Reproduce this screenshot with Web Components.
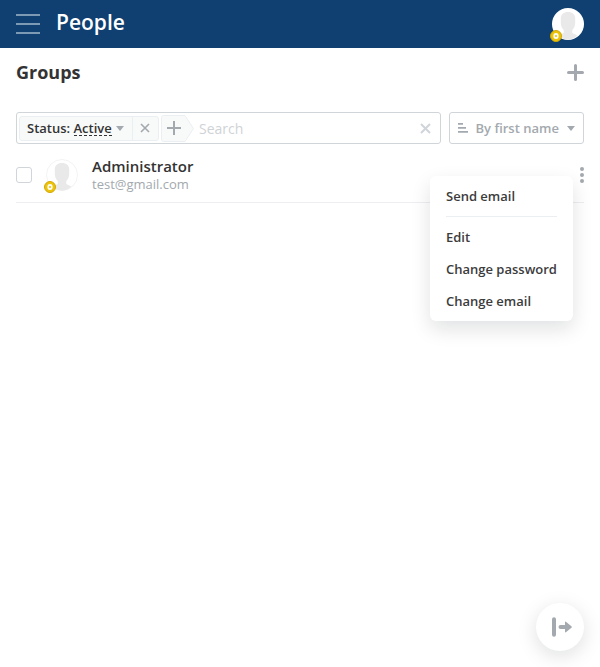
<!DOCTYPE html>
<html lang="en">
<head>
<meta charset="utf-8">
<title>People</title>
<style>
html,body{margin:0;height:100%;overflow:hidden;background:#fff}
body{font-family:"Open Sans","Noto Sans",sans-serif;color:#333}
</style>
</head>
<body>
<people-app></people-app>
<script>
function define(name, html) {
  const t = document.createElement('template');
  t.innerHTML = html;
  customElements.define(name, class extends HTMLElement {
    constructor() {
      super();
      this.attachShadow({ mode: 'open' }).appendChild(t.content.cloneNode(true));
    }
  });
}

define('user-avatar', `
<style>
:host{display:block;position:relative;width:32px;height:32px;flex:none}
svg{display:block}
.badge{position:absolute;left:-2px;top:22px}
</style>
<svg width="32" height="32" viewBox="0 0 32 32">
  <circle cx="16" cy="16" r="16" fill="#fff"/>
  <circle cx="16" cy="16" r="15.5" fill="none" stroke="#f3f3f3" stroke-width="var(--ring,0)"/>
  <path fill="#e9e9e9" d="M16 4C11.500 4 8.800 6.500 8.800 10.500v4c0 2.500.6 4.200 1.500 5.800.4.800 1 1.500 1.500 2v2.500c-.8 1.200-3.400 1.400-5.200 2.800C9.200 30.400 12.400 31.700 16 31.700s6.800-1.300 9.400-4.100c-1.800-1.400-4.400-1.600-5.200-2.800v-2.500c.5-.5 1.100-1.200 1.500-2 .9-1.600 1.500-3.300 1.500-5.800v-4C23.200 6.500 20.500 4 16 4z"/>
</svg>
<svg class="badge" width="12" height="12" viewBox="0 0 12 12">
  <circle cx="6" cy="6" r="5.500" fill="#edc409" stroke="#d3a706"/>
  <ellipse cx="6" cy="6" rx="1.800" ry="2.200" fill="none" stroke="#fff" stroke-width="1.700"/>
</svg>`);

define('app-header', `
<style>
:host{display:flex;align-items:center;height:48px;box-sizing:border-box;padding:0 16px;background:#0f4071;color:#fff}
svg{display:block;flex:none}
h1{margin:0 auto 0 16px;font-size:21px;font-weight:600;line-height:28px;padding-bottom:4px}
</style>
<svg width="24" height="20" viewBox="0 0 24 20" fill="#7d9ab4"><path d="M0 0h24v2H0zM0 9h24v2H0zM0 18h24v2H0z"/></svg>
<h1><slot></slot></h1>
<user-avatar></user-avatar>`);

define('section-title', `
<style>
:host{display:flex;align-items:center;justify-content:space-between;height:48px}
h2{margin:0;font-size:18px;line-height:24px;font-weight:700}
svg{display:block}
</style>
<h2><slot></slot></h2>
<svg width="17" height="17" viewBox="0 0 17 17"><path d="M8.500 1.500v14M1.500 8.500h14" stroke="#a3a9ae" stroke-width="3" stroke-linecap="round"/></svg>`);

define('filter-chip', `
<style>
:host{display:flex;align-items:stretch;width:140px;height:25px;box-sizing:border-box;border:1px solid #eceff1;border-radius:3px;background:#f8f9f9;font-size:13px;font-weight:600;line-height:23px}
.label{display:flex;flex:1;align-items:center;padding-left:7px;white-space:pre}
.value{line-height:17px;height:15px;border-bottom:1px dashed #333}
.arrow{margin-left:4px}
.close{display:flex;align-items:center;justify-content:center;width:25px;border-left:1px solid #eceff1}
.close svg{margin-right:1px}
</style>
<div class="label"><slot name="name"></slot><span> </span><span class="value"><slot name="value"></slot></span>
<svg class="arrow" width="8" height="5" viewBox="0 0 8 5"><path d="M0 0h8L4 5z" fill="#a3a9ae"/></svg></div>
<div class="close"><svg width="10" height="10" viewBox="0 0 10 10"><path d="M1 1l8 8M9 1l-8 8" stroke="#a3a9ae" stroke-width="1.600"/></svg></div>`);

define('filter-input', `
<style>
:host{display:flex;align-items:center;width:425px;height:32px;box-sizing:border-box;border:1px solid #d0d5da;border-radius:3px;padding:0 9px 0 2px}
.add{display:block;margin-left:2px}
.hint{margin:0 auto 0 5px;font-size:14px;font-weight:500;line-height:18px;padding-top:1px;color:#d0d3d6}
</style>
<slot></slot>
<svg class="add" width="33" height="27" viewBox="0 0 33 27"><path d="M2.500.5h21.500l8.500 13-8.500 13H2.500a2 2 0 0 1-2-2v-22a2 2 0 0 1 2-2z" fill="#f8f9f9" stroke="#eceff1"/><path d="M13 6v14M6 13h14" stroke="#a3a9ae" stroke-width="2"/></svg>
<span class="hint">Search</span>
<svg width="11" height="11" viewBox="0 0 11 11"><path d="M1 1l9 9M10 1l-9 9" stroke="#d0d5da" stroke-width="2"/></svg>`);

define('sort-button', `
<style>
:host{display:flex;align-items:center;width:135px;height:32px;box-sizing:border-box;border:1px solid #d0d5da;border-radius:3px;padding:0 8px;font-size:13px;font-weight:600;color:#a3a9ae}
span{margin:0 auto 0 7.500px;line-height:18px}
svg{display:block}
</style>
<svg width="10" height="10" viewBox="0 0 10 10" fill="#a3a9ae"><path d="M0 0h5v1.800H0zM0 4h8v1.800H0zM0 8h10v1.800H0z"/></svg>
<span><slot></slot></span>
<svg width="8" height="5" viewBox="0 0 8 5"><path d="M0 0h8L4 5z" fill="#a3a9ae"/></svg>`);

define('user-row', `
<style>
:host{display:flex;align-items:center;height:59px;box-sizing:border-box;border-bottom:1px solid #eceef1;padding-top:4px}
.check{width:16px;height:16px;box-sizing:border-box;border:1px solid #d0d5da;border-radius:3px}
user-avatar{margin-left:14px;--ring:1}
.text{display:flex;flex-direction:column;margin:0 auto 1px 14px}
.name{font-size:15px;font-weight:600;line-height:18px}
.mail{font-size:13px;line-height:18px;color:#a3a9ae}
</style>
<div class="check"></div>
<user-avatar></user-avatar>
<div class="text"><span class="name"><slot name="name"></slot></span><span class="mail"><slot name="mail"></slot></span></div>
<svg width="4" height="16" viewBox="0 0 4 16" fill="#a3a9ae"><circle cx="2" cy="2" r="2"/><circle cx="2" cy="8" r="2"/><circle cx="2" cy="14" r="2"/></svg>`);

define('menu-item', `
<style>:host{display:block;height:32px;line-height:32px;font-size:13px;font-weight:600;white-space:nowrap}</style><slot></slot>`);
define('menu-divider', `
<style>:host{display:block;height:1px;margin:4px 0;background:#eceff1}</style>`);

define('context-menu', `
<style>
:host{display:block;position:absolute;left:430px;top:176px;width:143px;height:145px;box-sizing:border-box;padding:4px 16px;background:#fff;border-radius:6px;box-shadow:0 8px 20px rgba(4,15,27,.12);color:#3c3c3c}
</style><slot></slot>`);

define('panel-toggle', `
<style>
:host{display:flex;align-items:center;justify-content:center;position:absolute;left:536px;top:603px;width:48px;height:48px;border-radius:50%;background:#fff;box-shadow:0 5px 20px rgba(4,15,27,.13)}
svg{margin-left:4px}
</style>
<svg width="20" height="20" viewBox="0 0 20 20"><path d="M2 2.300v15.500" stroke="#a3a9ae" stroke-width="4" stroke-linecap="round"/><path d="M8.500 8H13V5.500q0-1.500 1.200-.6l5.200 4.300q.8.800 0 1.600l-5.200 4.300q-1.200.9-1.200-.6V12H8.500a2 2 0 0 1 0-4z" fill="#a3a9ae"/></svg>`);

define('people-app', `
<style>
:host{display:block;position:relative;width:600px;height:667px;overflow:hidden}
main{padding:0 16px}
.filters{display:flex;gap:8px;margin-top:16px}
</style>
<app-header>People</app-header>
<main>
  <section-title>Groups</section-title>
  <div class="filters">
    <filter-input><filter-chip><span slot="name">Status:</span><span slot="value">Active</span></filter-chip></filter-input>
    <sort-button>By first name</sort-button>
  </div>
  <user-row><span slot="name">Administrator</span><span slot="mail">test@gmail.com</span></user-row>
</main>
<context-menu>
  <menu-item>Send email</menu-item><menu-divider></menu-divider>
  <menu-item>Edit</menu-item><menu-item>Change password</menu-item><menu-item>Change email</menu-item>
</context-menu>
<panel-toggle></panel-toggle>`);
</script>
</body>
</html>
